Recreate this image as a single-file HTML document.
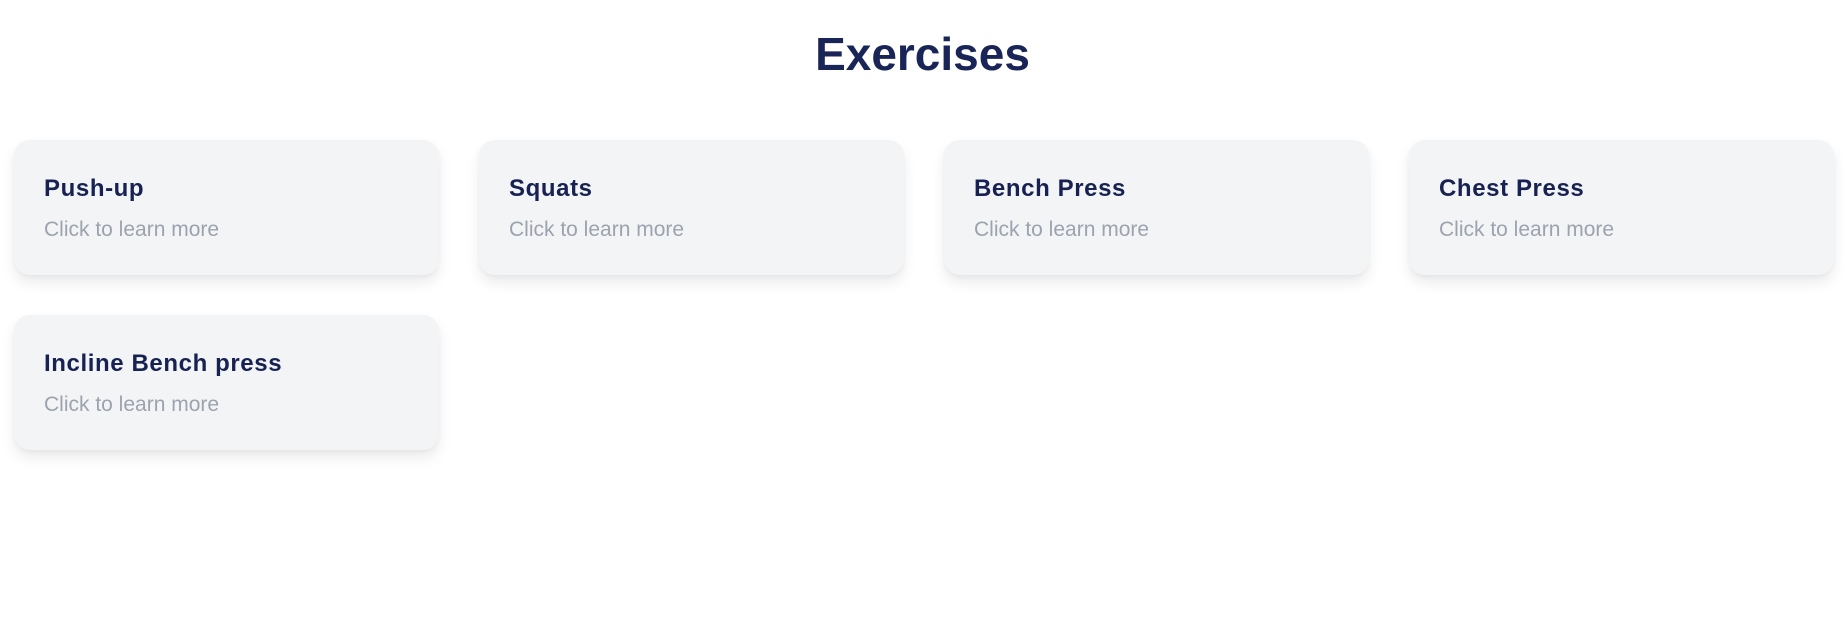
<!DOCTYPE html>
<html><head><meta charset="utf-8"><style>
body{margin:0;width:1845px;height:622px;background:#fff;font-family:"Liberation Sans",sans-serif;overflow:hidden;position:relative}
h1{position:absolute;left:0;right:0;top:27px;margin:0;text-align:center;font-size:46px;line-height:54px;font-weight:700;color:#1a2557}
.card{position:absolute;width:425px;height:135px;background:#f3f4f6;border-radius:16px;box-shadow:0 8px 14px rgba(0,0,0,0.08),0 2px 4px rgba(0,0,0,0.04)}
.t{position:absolute;left:30px;top:35px;font-size:24px;font-weight:700;color:#172252;letter-spacing:0.6px}
.s{position:absolute;left:30px;top:78px;font-size:21px;color:#9ca3af}
</style></head><body>
<h1>Exercises</h1>
<div class="card" style="left:14px;top:140px"><div class="t">Push-up</div><div class="s">Click to learn more</div></div>
<div class="card" style="left:479px;top:140px"><div class="t">Squats</div><div class="s">Click to learn more</div></div>
<div class="card" style="left:944px;top:140px"><div class="t">Bench Press</div><div class="s">Click to learn more</div></div>
<div class="card" style="left:1409px;top:140px"><div class="t">Chest Press</div><div class="s">Click to learn more</div></div>
<div class="card" style="left:14px;top:315px"><div class="t">Incline Bench press</div><div class="s">Click to learn more</div></div>
</body></html>
